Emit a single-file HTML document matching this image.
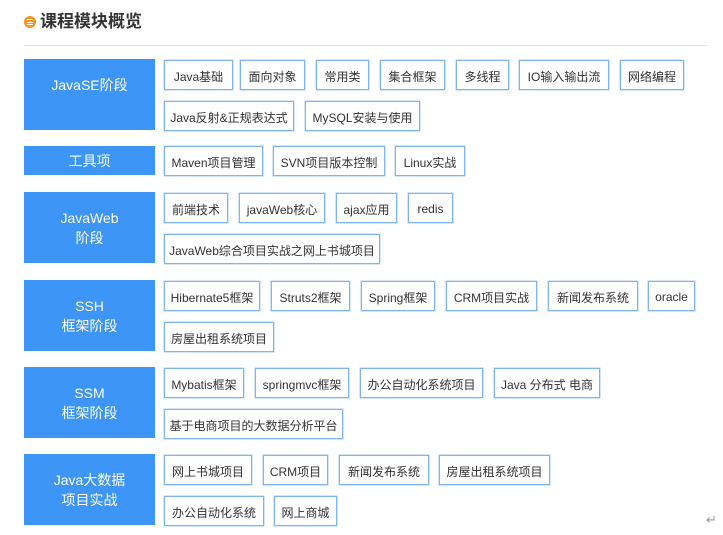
<!DOCTYPE html>
<html><head><meta charset="utf-8"><style>
body{margin:0;width:723px;height:535px;background:#fff;position:relative;overflow:hidden;font-family:"Liberation Sans","Noto Sans CJK SC",sans-serif;}
.t{position:absolute;left:40px;top:8px;font-size:17px;font-weight:bold;color:#333;line-height:28px;}
.ic{position:absolute;left:24px;top:16px;width:12px;height:12px;border-radius:50%;background:#f7931e;}
.ic i{position:absolute;left:3px;width:6px;height:1px;background:#fff;}
.hr{position:absolute;left:24px;top:45px;width:683px;height:1px;background:#e2e2e2;}
.l{position:absolute;left:24px;width:131px;background:#3d95f7;color:#fff;font-size:14px;text-align:center;display:flex;align-items:center;justify-content:center;line-height:20px;}
.b{position:absolute;border:1.5px solid #7fb6f2;box-sizing:border-box;height:30px;font-size:12px;color:#333;display:flex;align-items:center;justify-content:center;padding-top:2px;white-space:nowrap;box-shadow:0 0 0 0.5px #a9cdf7;}
.ret{position:absolute;left:706px;top:512px;font-size:13px;color:#999;}
</style></head><body>
<div class="ic"><i style="top:3px"></i><i style="top:5.5px"></i><i style="top:8px"></i></div>
<div class="t">课程模块概览</div>
<div class="hr"></div>

<div class="l" style="top:59px;height:71px;align-items:flex-start;padding-top:16px;box-sizing:border-box">JavaSE阶段</div>
<div class="b" style="left:164px;top:60px;width:69px">Java基础</div>
<div class="b" style="left:240px;top:60px;width:65px">面向对象</div>
<div class="b" style="left:316px;top:60px;width:53px">常用类</div>
<div class="b" style="left:380px;top:60px;width:65px">集合框架</div>
<div class="b" style="left:456px;top:60px;width:53px">多线程</div>
<div class="b" style="left:519px;top:60px;width:90px">IO输入输出流</div>
<div class="b" style="left:620px;top:60px;width:64px">网络编程</div>
<div class="b" style="left:164px;top:101px;width:130px">Java反射&amp;正规表达式</div>
<div class="b" style="left:305px;top:101px;width:115px">MySQL安装与使用</div>

<div class="l" style="top:146px;height:29px">工具项</div>
<div class="b" style="left:164px;top:146px;width:99px">Maven项目管理</div>
<div class="b" style="left:273px;top:146px;width:112px">SVN项目版本控制</div>
<div class="b" style="left:395px;top:146px;width:70px">Linux实战</div>

<div class="l" style="top:192px;height:71px">JavaWeb<br>阶段</div>
<div class="b" style="left:164px;top:193px;width:64px">前端技术</div>
<div class="b" style="left:239px;top:193px;width:86px">javaWeb核心</div>
<div class="b" style="left:336px;top:193px;width:61px">ajax应用</div>
<div class="b" style="left:408px;top:193px;width:45px">redis</div>
<div class="b" style="left:164px;top:234px;width:216px">JavaWeb综合项目实战之网上书城项目</div>

<div class="l" style="top:280px;height:71px">SSH<br>框架阶段</div>
<div class="b" style="left:164px;top:281px;width:96px">Hibernate5框架</div>
<div class="b" style="left:271px;top:281px;width:79px">Struts2框架</div>
<div class="b" style="left:361px;top:281px;width:74px">Spring框架</div>
<div class="b" style="left:446px;top:281px;width:91px">CRM项目实战</div>
<div class="b" style="left:548px;top:281px;width:90px">新闻发布系统</div>
<div class="b" style="left:648px;top:281px;width:47px">oracle</div>
<div class="b" style="left:164px;top:322px;width:110px">房屋出租系统项目</div>

<div class="l" style="top:367px;height:71px">SSM<br>框架阶段</div>
<div class="b" style="left:164px;top:368px;width:80px">Mybatis框架</div>
<div class="b" style="left:255px;top:368px;width:94px">springmvc框架</div>
<div class="b" style="left:360px;top:368px;width:123px">办公自动化系统项目</div>
<div class="b" style="left:494px;top:368px;width:106px">Java 分布式 电商</div>
<div class="b" style="left:164px;top:409px;width:179px">基于电商项目的大数据分析平台</div>

<div class="l" style="top:454px;height:71px">Java大数据<br>项目实战</div>
<div class="b" style="left:164px;top:455px;width:88px">网上书城项目</div>
<div class="b" style="left:263px;top:455px;width:65px">CRM项目</div>
<div class="b" style="left:339px;top:455px;width:90px">新闻发布系统</div>
<div class="b" style="left:439px;top:455px;width:111px">房屋出租系统项目</div>
<div class="b" style="left:164px;top:496px;width:100px">办公自动化系统</div>
<div class="b" style="left:274px;top:496px;width:63px">网上商城</div>
<div class="ret">↵</div>
</body></html>
